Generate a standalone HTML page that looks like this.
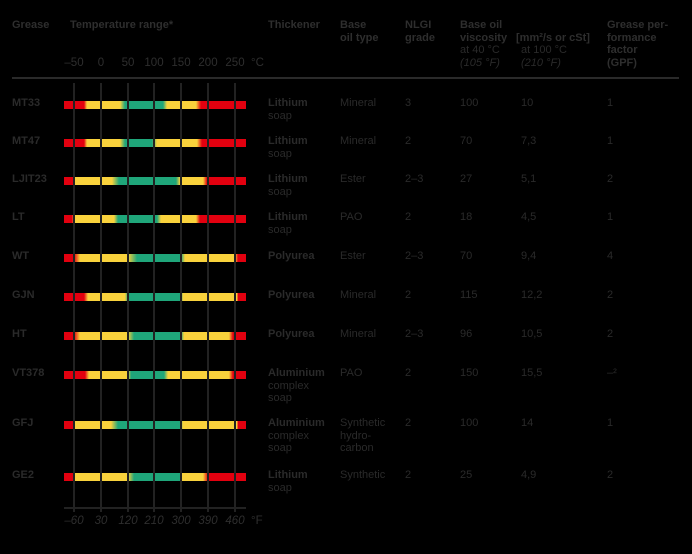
<!DOCTYPE html>
<html><head><meta charset="utf-8"><style>
body{margin:0;background:#000;width:692px;height:554px;overflow:hidden;position:relative;font-family:"Liberation Sans",sans-serif;font-size:11px;line-height:12.5px;color:#2a2a2a}
.t{position:absolute;white-space:nowrap}
.h{font-weight:bold;color:#2e2e2e}
.b{font-weight:bold}
.bar{position:absolute;left:64px;width:182px;height:8px}
.v{position:absolute;top:83px;width:2px;height:429px;background:#222}
.c{position:absolute;width:40px;text-align:center;margin-left:-20px;color:#2e2e2e;font-size:11.5px}
</style></head><body>
<div class="t h" style="left:12px;top:19px">Grease</div>
<div class="t h" style="left:70px;top:19px">Temperature range*</div>
<div class="t h" style="left:268px;top:19px">Thickener</div>
<div class="t h" style="left:340px;top:19px">Base<br>oil type</div>
<div class="t h" style="left:405px;top:19px">NLGI<br>grade</div>
<div class="t h" style="left:460px;top:19px">Base oil<br>viscosity</div>
<div class="t h" style="left:516px;top:31.5px">[mm²/s or cSt]</div>
<div class="t" style="left:460px;top:44px">at 40 °C<br><i>(105 °F)</i></div>
<div class="t" style="left:521px;top:44px">at 100 °C<br><i>(210 °F)</i></div>
<div class="t h" style="left:607px;top:19px">Grease per-<br>formance<br>factor<br>(GPF)</div>
<div class="c" style="left:74px;top:57px">–50</div>
<div class="c" style="left:101px;top:57px">0</div>
<div class="c" style="left:128px;top:57px">50</div>
<div class="c" style="left:154px;top:57px">100</div>
<div class="c" style="left:181px;top:57px">150</div>
<div class="c" style="left:208px;top:57px">200</div>
<div class="c" style="left:235px;top:57px">250</div>
<div class="t" style="left:251px;top:57px;color:#2e2e2e;font-size:11.5px">°C</div>
<div style="position:absolute;left:12px;top:77px;width:667px;height:2px;background:#2a2a2a"></div>

<div class="bar" style="top:101px;background:linear-gradient(90deg,#e2000f 0,#e2000f 20px,#f9d23c 23px,#f9d23c 56px,#1fa67a 61px,#1fa67a 99px,#f9d23c 103px,#f9d23c 132px,#e2000f 137px,#e2000f 182px)"></div>
<div class="bar" style="top:139px;background:linear-gradient(90deg,#e2000f 0,#e2000f 20px,#f9d23c 23px,#f9d23c 56px,#1fa67a 61px,#1fa67a 88px,#f9d23c 93px,#f9d23c 133px,#e2000f 138px,#e2000f 182px)"></div>
<div class="bar" style="top:177px;background:linear-gradient(90deg,#e2000f 0,#e2000f 10px,#f9d23c 11px,#f9d23c 48px,#1fa67a 55px,#1fa67a 112px,#f9d23c 116px,#f9d23c 139px,#e2000f 143px,#e2000f 182px)"></div>
<div class="bar" style="top:215px;background:linear-gradient(90deg,#e2000f 0,#e2000f 8px,#f9d23c 10px,#f9d23c 50px,#1fa67a 54px,#1fa67a 93px,#f9d23c 97px,#f9d23c 132px,#e2000f 136px,#e2000f 182px)"></div>
<div class="bar" style="top:254px;background:linear-gradient(90deg,#e2000f 0,#e2000f 10px,#f9d23c 16px,#f9d23c 64px,#1fa67a 73px,#1fa67a 117px,#f9d23c 121px,#f9d23c 171px,#e2000f 174px,#e2000f 182px)"></div>
<div class="bar" style="top:293px;background:linear-gradient(90deg,#e2000f 0,#e2000f 20px,#f9d23c 24px,#f9d23c 61px,#1fa67a 64px,#1fa67a 117px,#f9d23c 119px,#f9d23c 173px,#e2000f 174px,#e2000f 182px)"></div>
<div class="bar" style="top:332px;background:linear-gradient(90deg,#e2000f 0,#e2000f 10px,#f9d23c 16px,#f9d23c 64px,#1fa67a 70px,#1fa67a 117px,#f9d23c 120px,#f9d23c 165px,#e2000f 169px,#e2000f 182px)"></div>
<div class="bar" style="top:371px;background:linear-gradient(90deg,#e2000f 0,#e2000f 21px,#f9d23c 25px,#f9d23c 64px,#1fa67a 67px,#1fa67a 100px,#f9d23c 104px,#f9d23c 165px,#e2000f 169px,#e2000f 182px)"></div>
<div class="bar" style="top:421px;background:linear-gradient(90deg,#e2000f 0,#e2000f 10px,#f9d23c 11px,#f9d23c 47px,#1fa67a 54px,#1fa67a 116px,#f9d23c 119px,#f9d23c 173px,#e2000f 174px,#e2000f 182px)"></div>
<div class="bar" style="top:473px;background:linear-gradient(90deg,#e2000f 0,#e2000f 10px,#f9d23c 11px,#f9d23c 64px,#1fa67a 70px,#1fa67a 117px,#f9d23c 118px,#f9d23c 139px,#e2000f 144px,#e2000f 182px)"></div>

<div class="v" style="left:73px"></div><div class="v" style="left:100px"></div><div class="v" style="left:127px"></div><div class="v" style="left:153px"></div><div class="v" style="left:180px"></div><div class="v" style="left:207px"></div><div class="v" style="left:234px"></div>
<div style="position:absolute;left:64px;top:507px;width:182px;height:2px;background:#222"></div>
<div class="c" style="left:74px;top:515px"><i>–60</i></div>
<div class="c" style="left:101px;top:515px"><i>30</i></div>
<div class="c" style="left:128px;top:515px"><i>120</i></div>
<div class="c" style="left:154px;top:515px"><i>210</i></div>
<div class="c" style="left:181px;top:515px"><i>300</i></div>
<div class="c" style="left:208px;top:515px"><i>390</i></div>
<div class="c" style="left:235px;top:515px"><i>460</i></div>
<div class="t" style="left:251px;top:515px;color:#2e2e2e;font-size:11.5px">°F</div>

<div class="t b" style="left:12px;top:97px">MT33</div><div class="t" style="left:268px;top:97px"><b>Lithium</b><br>soap</div><div class="t" style="left:340px;top:97px">Mineral</div><div class="t" style="left:405px;top:97px">3</div><div class="t" style="left:460px;top:97px">100</div><div class="t" style="left:521px;top:97px">10</div><div class="t" style="left:607px;top:97px">1</div>
<div class="t b" style="left:12px;top:135px">MT47</div><div class="t" style="left:268px;top:135px"><b>Lithium</b><br>soap</div><div class="t" style="left:340px;top:135px">Mineral</div><div class="t" style="left:405px;top:135px">2</div><div class="t" style="left:460px;top:135px">70</div><div class="t" style="left:521px;top:135px">7,3</div><div class="t" style="left:607px;top:135px">1</div>
<div class="t b" style="left:12px;top:173px">LJIT23</div><div class="t" style="left:268px;top:173px"><b>Lithium</b><br>soap</div><div class="t" style="left:340px;top:173px">Ester</div><div class="t" style="left:405px;top:173px">2–3</div><div class="t" style="left:460px;top:173px">27</div><div class="t" style="left:521px;top:173px">5,1</div><div class="t" style="left:607px;top:173px">2</div>
<div class="t b" style="left:12px;top:211px">LT</div><div class="t" style="left:268px;top:211px"><b>Lithium</b><br>soap</div><div class="t" style="left:340px;top:211px">PAO</div><div class="t" style="left:405px;top:211px">2</div><div class="t" style="left:460px;top:211px">18</div><div class="t" style="left:521px;top:211px">4,5</div><div class="t" style="left:607px;top:211px">1</div>
<div class="t b" style="left:12px;top:250px">WT</div><div class="t b" style="left:268px;top:250px">Polyurea</div><div class="t" style="left:340px;top:250px">Ester</div><div class="t" style="left:405px;top:250px">2–3</div><div class="t" style="left:460px;top:250px">70</div><div class="t" style="left:521px;top:250px">9,4</div><div class="t" style="left:607px;top:250px">4</div>
<div class="t b" style="left:12px;top:289px">GJN</div><div class="t b" style="left:268px;top:289px">Polyurea</div><div class="t" style="left:340px;top:289px">Mineral</div><div class="t" style="left:405px;top:289px">2</div><div class="t" style="left:460px;top:289px">115</div><div class="t" style="left:521px;top:289px">12,2</div><div class="t" style="left:607px;top:289px">2</div>
<div class="t b" style="left:12px;top:328px">HT</div><div class="t b" style="left:268px;top:328px">Polyurea</div><div class="t" style="left:340px;top:328px">Mineral</div><div class="t" style="left:405px;top:328px">2–3</div><div class="t" style="left:460px;top:328px">96</div><div class="t" style="left:521px;top:328px">10,5</div><div class="t" style="left:607px;top:328px">2</div>
<div class="t b" style="left:12px;top:367px">VT378</div><div class="t" style="left:268px;top:367px"><b>Aluminium</b><br>complex<br>soap</div><div class="t" style="left:340px;top:367px">PAO</div><div class="t" style="left:405px;top:367px">2</div><div class="t" style="left:460px;top:367px">150</div><div class="t" style="left:521px;top:367px">15,5</div><div class="t" style="left:607px;top:367px">–²</div>
<div class="t b" style="left:12px;top:417px">GFJ</div><div class="t" style="left:268px;top:417px"><b>Aluminium</b><br>complex<br>soap</div><div class="t" style="left:340px;top:417px">Synthetic<br>hydro-<br>carbon</div><div class="t" style="left:405px;top:417px">2</div><div class="t" style="left:460px;top:417px">100</div><div class="t" style="left:521px;top:417px">14</div><div class="t" style="left:607px;top:417px">1</div>
<div class="t b" style="left:12px;top:469px">GE2</div><div class="t" style="left:268px;top:469px"><b>Lithium</b><br>soap</div><div class="t" style="left:340px;top:469px">Synthetic</div><div class="t" style="left:405px;top:469px">2</div><div class="t" style="left:460px;top:469px">25</div><div class="t" style="left:521px;top:469px">4,9</div><div class="t" style="left:607px;top:469px">2</div>
</body></html>
